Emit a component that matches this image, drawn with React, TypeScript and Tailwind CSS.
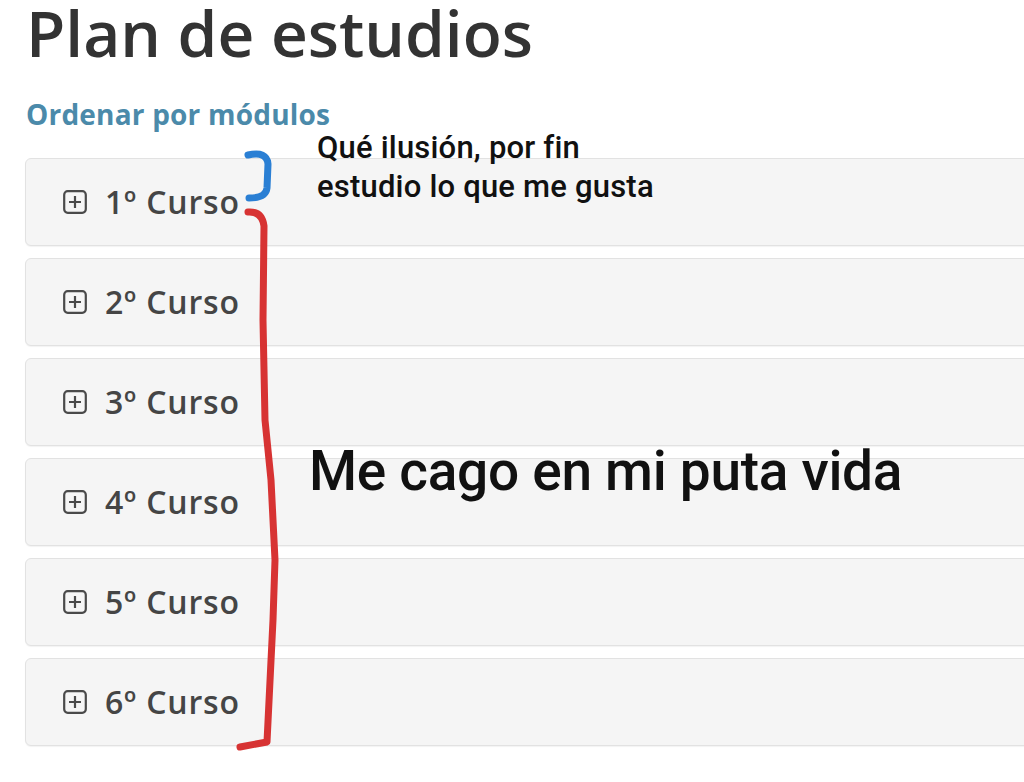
import React from "react";

const cursos = ["1º Curso", "2º Curso", "3º Curso", "4º Curso", "5º Curso", "6º Curso"];

function PlusSquare() {
  return (
    <svg width="24" height="24" viewBox="0 0 24 24" fill="none" stroke="#4a4a4a" strokeWidth="2.2">
      <rect x="1.2" y="1.2" width="21.6" height="21.6" rx="3.5" />
      <path d="M12 6v12M6 12h12" />
    </svg>
  );
}

export default function App() {
  return (
    <div className="relative w-[1024px] h-[782px] overflow-hidden bg-white" style={{ fontFamily: "'Open Sans', 'Noto Sans', sans-serif" }}>
      <div className="pl-[25px] pt-[4px]">
        <h1 className="pl-[1px] text-[64px] leading-[66px] font-semibold text-[#333333] whitespace-nowrap mt-[-4px]">Plan de estudios</h1>
        <div className="mt-[34px] pl-[1px] text-[28px] leading-[28px] font-bold text-[#4b8aaa] tracking-[0.2px]">Ordenar por módulos</div>
        <div className="mt-[30px] flex flex-col gap-[12px] w-[1100px]">
          {cursos.map((c) => (
            <div
              key={c}
              className="h-[88px] flex items-center gap-[18px] pl-[37px] bg-[#f5f5f5] border border-[#e2e2e2] rounded-[6px] shadow-[0_1px_1px_rgba(0,0,0,0.05)]"
            >
              <PlusSquare />
              <span className="text-[32px] font-semibold text-[#454545] tracking-[0.8px]">{c}</span>
            </div>
          ))}
        </div>
      </div>

      <div
        className="absolute left-[317px] top-[128px] text-[31px] leading-[39px] font-medium text-[#111111] tracking-[0.2px] whitespace-nowrap"
        style={{ fontFamily: "Roboto, 'Liberation Sans', sans-serif" }}
      >
        <div>Qué ilusión, por fin</div>
        <div>estudio lo que me gusta</div>
      </div>

      <div
        className="absolute left-[309px] top-[441px] text-[55px] leading-[60px] font-medium text-[#111111] tracking-[-0.3px] whitespace-nowrap"
        style={{ fontFamily: "Roboto, 'Liberation Sans', sans-serif" }}
      >
        Me cago en mi puta vida
      </div>

      <svg className="absolute left-0 top-0 pointer-events-none" width="1024" height="782" viewBox="0 0 1024 782" fill="none" strokeLinecap="round" strokeLinejoin="round">
        <path d="M248 155 Q267 151 268 164 L267 188 Q266 198 249 198" stroke="#2a7fd4" strokeWidth="7" />
        <path d="M248 212 Q262 211 264 226 L263 320 L265 420 L271 480 L275 560 L273 620 L267 742 L240 747" stroke="#d73333" strokeWidth="7" />
      </svg>
    </div>
  );
}
